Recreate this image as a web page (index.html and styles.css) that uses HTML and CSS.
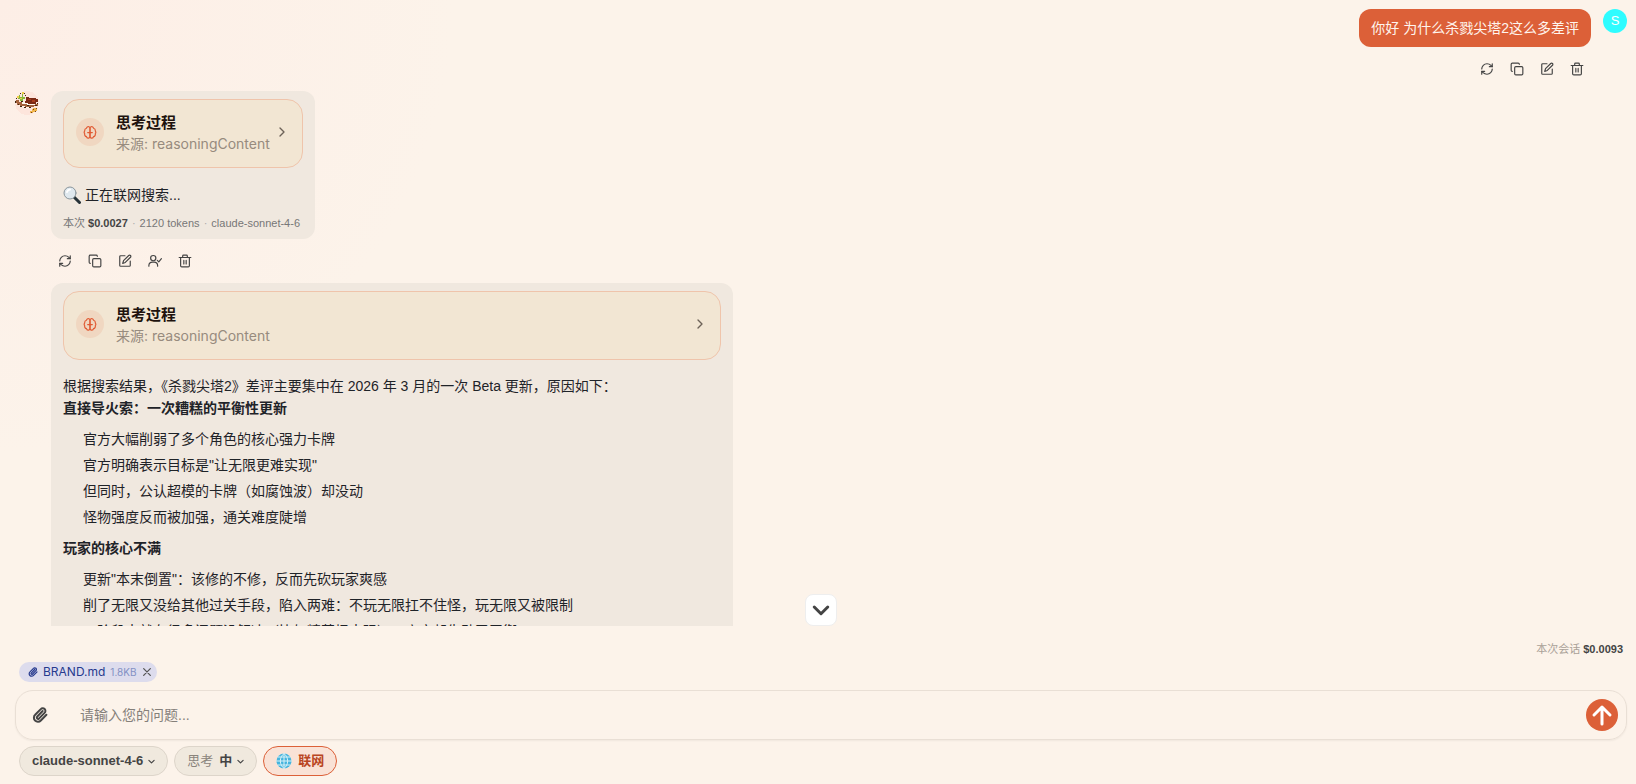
FILE: index.html
```html
<!DOCTYPE html>
<html lang="zh-CN">
<head>
<meta charset="utf-8">
<title>Chat</title>
<link rel="stylesheet" href="styles.css">
</head>
<body>
<svg class="defs" aria-hidden="true">
  <symbol id="refresh" viewBox="0 0 24 24"><path d="M3 12a9 9 0 0 1 9-9 9.750 9.750 0 0 1 6.740 2.740L21 8"/><path d="M21 3v5h-5"/><path d="M21 12a9 9 0 0 1-9 9 9.750 9.750 0 0 1-6.740-2.740L3 16"/><path d="M8 16H3v5"/></symbol>
  <symbol id="copy" viewBox="0 0 24 24"><rect x="8" y="8" width="14" height="14" rx="2"/><path d="M4 16c-1.100 0-2-.9-2-2V4c0-1.100.9-2 2-2h10c1.100 0 2 .9 2 2"/></symbol>
  <symbol id="edit" viewBox="0 0 24 24"><path d="M12 3H4.500A1.500 1.500 0 0 0 3 4.500v15A1.500 1.500 0 0 0 4.500 21h15a1.500 1.500 0 0 0 1.500-1.500V12"/><path d="M18.400 2.600a2.100 2.100 0 0 1 3 3L12.500 14.500 8 16l1.500-4.500z"/></symbol>
  <symbol id="usercheck" viewBox="0 0 24 24"><circle cx="9" cy="7" r="4.500"/><path d="M1.500 21v-1.500A6 6 0 0 1 7.500 14h3a6 6 0 0 1 6 5.500V21"/><path d="m16 11 2.500 2.500L23 8"/></symbol>
  <symbol id="trash" viewBox="0 0 24 24"><path d="M2 6h20"/><path d="M19.500 6v14a2 2 0 0 1-2 2h-11a2 2 0 0 1-2-2V6"/><path d="M8 6V3.500A1.500 1.500 0 0 1 9.500 2h5A1.500 1.500 0 0 1 16 3.500V6"/><path d="M10 11v6M14 11v6"/></symbol>
  <symbol id="brain" viewBox="0 0 24 24"><path d="M10 3a3 3 0 0 0-4 2.500A4 4 0 0 0 3 10a4 4 0 0 0 0 5 4 4 0 0 0 3 5 3 3 0 0 0 6-1V5a2.500 2.500 0 0 0-2-2"/><path d="M14 3a3 3 0 0 1 4 2.500A4 4 0 0 1 21 10a4 4 0 0 1 0 5 4 4 0 0 1-3 5 3 3 0 0 1-6-1V5a2.500 2.500 0 0 1 2-2"/><path d="M8 13h8"/></symbol>
  <symbol id="chevron" viewBox="0 0 24 24"><path d="m9 18 6-6-6-6"/></symbol>
  <symbol id="down" viewBox="0 0 24 24"><path d="m3 8 9 9 9-9"/></symbol>
  <symbol id="clip" viewBox="0 0 24 24"><path d="m16 6-8.400 8.600a2 2 0 0 0 2.800 2.800l8.400-8.600a4 4 0 1 0-5.650-5.650l-8.380 8.550a6 6 0 1 0 8.480 8.480l8.380-8.550"/></symbol>
  <symbol id="close" viewBox="0 0 24 24"><path d="M4 4l16 16M20 4 4 20"/></symbol>
</svg>
<div class="app">
  <main class="chat">
    <section class="row user">
      <div class="stack end">
        <div class="bubble mine">你好 为什么杀戮尖塔2这么多差评</div>
        <div class="actions">
          <button aria-label="重新生成"><svg><use href="#refresh"/></svg></button>
          <button aria-label="复制"><svg><use href="#copy"/></svg></button>
          <button aria-label="编辑"><svg><use href="#edit"/></svg></button>
          <button aria-label="删除"><svg><use href="#trash"/></svg></button>
        </div>
      </div>
      <div class="avatar cyan">S</div>
    </section>
    <section class="row">
      <div class="avatar food">
        <svg viewBox="0 0 24 24" shape-rendering="crispEdges">
          <circle cx="12" cy="12" r="12" fill="#fde5dc"/>
          <path d="M3 11h18v3l-3 2-8 1-7-3z" fill="#fff8ee"/>
          <path d="M1 9h3v2h3v2h5v1h8v-1h3v2h-4v1h-9v-1H5v-1H2v-2H1z" fill="#a5623c"/>
          <path d="M11 6h3v1h7v1h2v3h-2v2h-8v-1h-3v-2h1z" fill="#7c2a14"/>
          <path d="M13 8h3v1h-3zM17 9h3v2h-3z" fill="#a93c1d"/>
          <path d="M4 4h1v2h2V3h1v3h2v2H8v2H5V8H3V6h1z" fill="#88b83a"/>
          <path d="M2 5h2v2H2zM7 1h2v2H7zM5 7h2v1H5z" fill="#f0ce48"/>
          <path d="M0 10h1v2H0zM3 13h1v1H3zM5 15h2v1H5zM9 16h2v1H9zM14 16h2v1h-2zM20 14h2v1h-2zM5 2h1v1H5zM10 4h1v1h-1zM12 14h2v1h-2zM6 10h2v1H6zM1 7h1v1H1zM9 2h1v1H9zM22 12h1v1h-1z" fill="#41250f"/>
          <path d="M18 17h3v1h1v2h-2v1h-2v1h-3v-2h2v-2h1z" fill="#efb54b"/>
          <path d="M18 18h1v1h-1zM16 21h1v1h-1zM20 20h1v1h-1zM21 17h1v1h-1z" fill="#754219"/>
        </svg>
      </div>
      <div class="stack">
        <article class="bubble">
          <button class="think">
            <span class="brain"><svg><use href="#brain"/></svg></span>
            <span class="label"><strong>思考过程</strong><span>来源: reasoningContent</span></span>
            <svg class="arrow"><use href="#chevron"/></svg>
          </button>
          <p class="searching"><svg class="lens" viewBox="0 0 18 18"><path d="m11 11 5.500 5.500" stroke="#263238" stroke-width="3" stroke-linecap="round"/><circle cx="7" cy="7" r="6" fill="#dfe8ee" stroke="#8a959c" stroke-width="1"/><path d="M4 6a3.500 3.500 0 0 1 3-2.500" stroke="#fff" stroke-width="2" fill="none"/></svg>正在联网搜索...</p>
          <div class="usage">本次 <b>$0.0027</b> <i>·</i> 2120 tokens <i>·</i> claude-sonnet-4-6</div>
        </article>
        <div class="actions">
          <button aria-label="重新生成"><svg><use href="#refresh"/></svg></button>
          <button aria-label="复制"><svg><use href="#copy"/></svg></button>
          <button aria-label="编辑"><svg><use href="#edit"/></svg></button>
          <button aria-label="角色"><svg><use href="#usercheck"/></svg></button>
          <button aria-label="删除"><svg><use href="#trash"/></svg></button>
        </div>
        <article class="bubble wide">
          <button class="think">
            <span class="brain"><svg><use href="#brain"/></svg></span>
            <span class="label"><strong>思考过程</strong><span>来源: reasoningContent</span></span>
            <svg class="arrow"><use href="#chevron"/></svg>
          </button>
          <p>根据搜索结果，《杀戮尖塔2》差评主要集中在 2026 年 3 月的一次 Beta 更新，原因如下：</p>
          <p><b>直接导火索：一次糟糕的平衡性更新</b></p>
          <ul>
            <li>官方大幅削弱了多个角色的核心强力卡牌</li>
            <li>官方明确表示目标是"让无限更难实现"</li>
            <li>但同时，公认超模的卡牌（如腐蚀波）却没动</li>
            <li>怪物强度反而被加强，通关难度陡增</li>
          </ul>
          <p><b>玩家的核心不满</b></p>
          <ul>
            <li>更新"本末倒置"：该修的不修，反而先砍玩家爽感</li>
            <li>削了无限又没给其他过关手段，陷入两难：不玩无限扛不住怪，玩无限又被限制</li>
            <li>一阶段本就有很多问题没解决（比如精英怪太强），官方却先动了平衡</li>
          </ul>
        </article>
      </div>
    </section>
  </main>
  <footer class="composer">
    <button class="scroll" aria-label="滚动到底部"><svg><use href="#down"/></svg></button>
    <div class="session">本次会话 <b>$0.0093</b></div>
    <div class="files">
      <span class="file"><svg class="fclip"><use href="#clip"/></svg><span>BRAND.md</span><small>1.8KB</small><button aria-label="移除"><svg><use href="#close"/></svg></button></span>
    </div>
    <form class="entry">
      <button type="button" class="attach" aria-label="附件"><svg><use href="#clip"/></svg></button>
      <input type="text" aria-label="问题" placeholder="请输入您的问题...">
      <button type="button" class="send" aria-label="发送"><svg viewBox="0 0 24 24"><path d="M12 21V4M4 12l8-8 8 8"/></svg></button>
    </form>
    <div class="options">
      <button class="pill">claude-sonnet-4-6<svg class="caret"><use href="#down"/></svg></button>
      <button class="pill"><span class="muted">思考</span><span class="level">中</span><svg class="caret"><use href="#down"/></svg></button>
      <button class="pill active"><svg class="globe" viewBox="0 0 16 16"><circle cx="8" cy="8" r="7.500" fill="#45b4de" stroke="none"/><path d="M8 .5v15M.5 8h15M2 4h12M2 12h12M8 .5C3 4 3 12 8 15.500M8 .5c5 3.500 5 11.500 0 15" stroke="#d8f1f7"/></svg>联网</button>
    </div>
  </footer>
</div>
</body>
</html>
```
FILE: styles.css
```css
* { box-sizing: border-box; }
body {
  margin: 0;
  height: 100vh;
  overflow: hidden;
  font: 14px/22px "Liberation Sans", "Noto Sans CJK SC", sans-serif;
  color: #1f2328;
  background: radial-gradient(circle at 0 0, #fdeee6 0, #fcf3ea 25%) #fcf3ea;
}
button { font: inherit; color: inherit; border: 0; padding: 0; background: none; cursor: pointer; }
svg { fill: none; stroke: currentColor; stroke-width: 2; stroke-linecap: round; stroke-linejoin: round; display: block; flex: none; }
p, ul { margin: 0; padding: 0; }
.defs { position: absolute; width: 0; height: 0; }
.app { height: 100vh; display: flex; flex-direction: column; }
.chat { flex: 1; min-height: 0; overflow: hidden; padding: 9px 9px 0 15px; }
.row { display: flex; align-items: flex-start; gap: 12px; }
.row.user { justify-content: flex-end; }
.stack { display: flex; flex-direction: column; align-items: flex-start; }
.stack.end { align-items: flex-end; }
.bubble { background: #f0e8df; border-radius: 12px; padding: 8px 12px 7px; }
.bubble.mine { background: #dc6038; color: #fff5ee; padding-bottom: 8px; }
.wide { width: 682px; max-width: 100%; padding-bottom: 24px; }
.avatar { width: 24px; height: 24px; border-radius: 50%; flex: none; }
.avatar.cyan { background: #2ffcff; color: #fff; text-align: center; font: 13px/24px "Liberation Sans", sans-serif; }
.food svg { width: 24px; height: 24px; stroke: none; }
.actions { display: flex; gap: 16px; height: 44px; align-items: center; padding: 0 7px; color: #444; }
.actions svg { width: 14px; height: 14px; }
.think {
  display: flex; align-items: center; width: 100%; padding: 11px 12px 14px; margin-bottom: 15px;
  border: 1px solid #efc4ab; border-radius: 16px; background: #f2e6d3; text-align: left;
}
.brain { width: 28px; height: 28px; border-radius: 50%; background: #f0d7c1; color: #e05a33; display: grid; place-items: center; margin-right: 12px; }
.brain svg { width: 14px; height: 14px; }
.label { flex: 1; display: flex; flex-direction: column; }
.label strong { font-size: 15px; line-height: 24px; color: #20120d; }
.label span { line-height: 18px; color: #978b7e; font-family: Inter, "Noto Sans CJK SC", sans-serif; }
.arrow { width: 16px; height: 16px; margin-left: 4px; color: #6d6258; }
.searching { display: flex; align-items: center; gap: 4px; margin-top: 16px; }
.lens { width: 18px; height: 18px; }
.usage { font-size: 11px; line-height: 18px; margin-top: 8px; color: #777; }
.usage b, .session b { color: #444; }
.usage i { color: #aaa; font-style: normal; margin: 0 1px; }
ul { list-style: none; padding: 9px 0 5px 20px; text-spacing-trim: space-all; }
li { margin-bottom: 4px; }
.scroll {
  position: absolute; left: 50%; top: -32px; width: 32px; height: 32px; margin-left: -13px;
  display: grid; place-items: center; border: 1px solid #eee; border-radius: 8px; background: #fff; color: #444;
}
.scroll svg { width: 18px; height: 18px; stroke-width: 4; }
.composer { position: relative; padding: 15px 9px 8px 15px; }
.session { text-align: right; padding-right: 4px; font-size: 11px; line-height: 16px; color: #aaa198; }
.files { display: flex; padding: 5px 4px 8px; }
.file { display: flex; align-items: center; height: 20px; padding: 0 5px 0 9px; gap: 5px; border-radius: 10px; background: #dddced; color: #263a8e; font: 12px/20px Inter, sans-serif; }
.file small { font-size: 10px; color: #8290c4; }
.file svg { width: 10px; height: 10px; color: #555; stroke-width: 3; }
.file .fclip { color: #263a8e; }
.entry { display: flex; align-items: center; height: 50px; padding: 0 8px 0 16px; border: 1px solid #e9dfd5; border-radius: 18px; box-shadow: 0 1px 2px #0000000d; }
.attach svg { width: 16px; height: 16px; stroke-width: 3; color: #444; }
.entry input { flex: 1; min-width: 0; margin-left: 32px; padding: 0; border: 0; outline: 0; background: none; font: inherit; color: inherit; }
.entry input::placeholder { color: #85807a; }
.send { width: 32px; height: 32px; border-radius: 50%; background: #dc6038; color: #fff; display: grid; place-items: center; }
.send svg { width: 24px; height: 24px; stroke-width: 3; }
.options { display: flex; gap: 6px; padding: 6px 4px 0; }
.pill { display: flex; align-items: center; gap: 5px; height: 30px; padding: 0 12px; border: 1px solid #ddd5ca; border-radius: 15px; background: #f0e9de; font-size: 13px; font-weight: bold; color: #444; }
.caret { width: 7px; height: 7px; stroke-width: 4; }
.muted { font-weight: normal; color: #8a847c; margin-right: 1px; }
.pill.active { gap: 6px; border-color: #dc6038; background: #f9e2d6; color: #b94523; }
.globe { width: 16px; height: 16px; stroke-width: 1; }
```
